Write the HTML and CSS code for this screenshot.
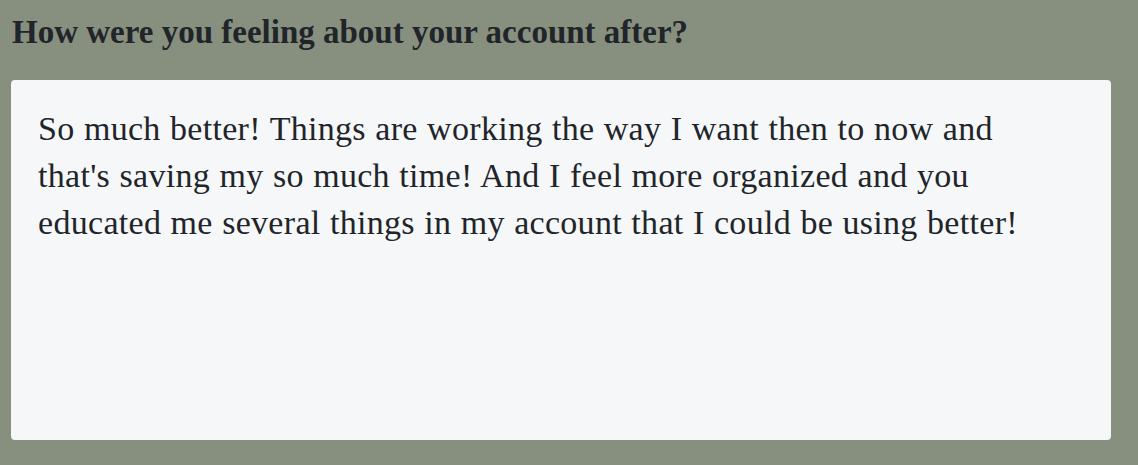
FILE: index.html
```html
<!DOCTYPE html>
<html>
<head>
<meta charset="utf-8">
<link rel="stylesheet" href="styles.css">
</head>
<body>
<div class="page">
  <h2 class="question">How were you feeling about your account after?</h2>
  <div class="answer">So much better! Things are working the way I want then to now and that's saving my so much time! And I feel more organized and you educated me several things in my account that I could be using better!</div>
</div>
</body>
</html>
```

FILE: styles.css
```css
html, body {
  margin: 0;
  padding: 0;
  background: #878f7f;
}
.page {
  padding: 0 27px 0 11px;
  font-family: "Liberation Serif", "Times New Roman", serif;
  color: #212529;
}
.question {
  margin: 0;
  padding: 12px 0 0 1px;
  height: 80px;
  box-sizing: border-box;
  font-size: 33px;
  font-weight: bold;
  line-height: 40px;
}
.answer {
  box-sizing: border-box;
  width: 1100px;
  height: 360px;
  background: #f6f7f9;
  border-radius: 4px;
  padding: 25px 40px 0 27px;
  font-size: 34px;
  line-height: 47px;
  letter-spacing: 0.3px;
  word-spacing: 0.6px;
}
```
